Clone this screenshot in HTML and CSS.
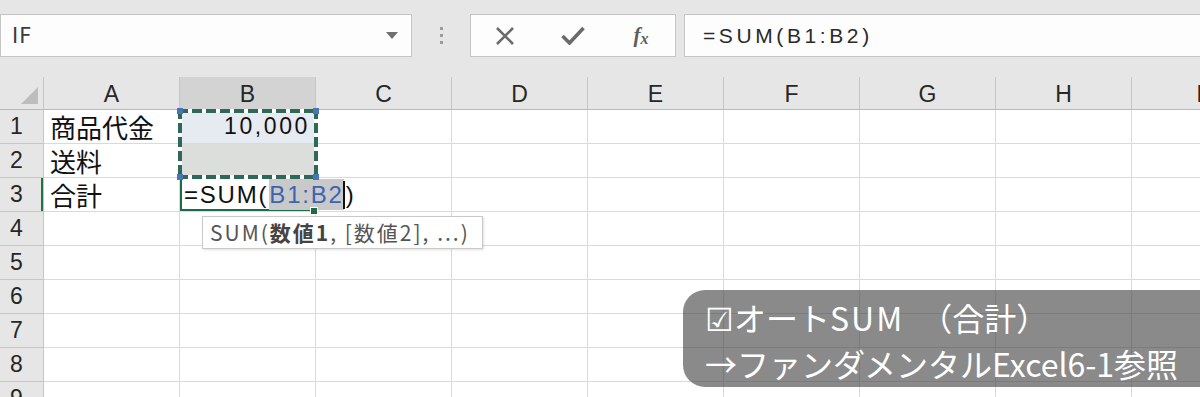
FILE: index.html
```html
<!DOCTYPE html>
<html lang="ja">
<head>
<meta charset="utf-8">
<title>Excel SUM</title>
<link rel="stylesheet" href="styles.css">
</head>
<body>
<div class="app">
  <div class="toolbar">
    <div class="namebox"><span class="nb-text">IF</span><span class="dd"></span></div>
    <div class="grip"><i></i><i></i><i></i></div>
    <div class="btnbox">
      <span class="slot"><svg width="20" height="18" viewBox="0 0 20 18"><path d="M2 1 L18 17 M18 1 L2 17" stroke="#6b6b6b" stroke-width="2.6" fill="none"/></svg></span>
      <span class="slot"><svg width="24" height="19" viewBox="0 0 24 19"><path d="M1.5 10 L8.5 17 L22.5 2" stroke="#6b6b6b" stroke-width="3.6" fill="none" stroke-linejoin="miter"/></svg></span>
      <span class="slot fx"><i>f</i><span class="fx-x">x</span></span>
    </div>
    <div class="formula">=SUM(B1:B2)</div>
  </div>

  <div class="sheet">
    <div class="corner"><span class="tri"></span></div>
    <div class="ch">A</div><div class="ch sel">B</div><div class="ch">C</div><div class="ch">D</div><div class="ch">E</div><div class="ch">F</div><div class="ch">G</div><div class="ch">H</div><div class="ch">I</div>

    <div class="rh">1</div><div class="c jp">商品代金</div><div class="c num b1">10,000<div class="range"><span class="h tl"></span><span class="h tr"></span><span class="h bl"></span><span class="h br"></span></div></div><div class="c"></div><div class="c"></div><div class="c"></div><div class="c"></div><div class="c"></div><div class="c"></div><div class="c"></div>
    <div class="rh">2</div><div class="c jp">送料</div><div class="c b2"></div><div class="c"></div><div class="c"></div><div class="c"></div><div class="c"></div><div class="c"></div><div class="c"></div><div class="c"></div>
    <div class="rh act">3</div><div class="c jp">合計</div><div class="c active"><span class="edit">=SUM(<span class="ref">B1:B2</span><span class="caret"></span>)</span><span class="fill"></span></div><div class="c"></div><div class="c"></div><div class="c"></div><div class="c"></div><div class="c"></div><div class="c"></div><div class="c"></div>
    <div class="rh">4</div><div class="c"></div><div class="c"></div><div class="c"></div><div class="c"></div><div class="c"></div><div class="c"></div><div class="c"></div><div class="c"></div><div class="c"></div>
    <div class="rh">5</div><div class="c"></div><div class="c"></div><div class="c"></div><div class="c"></div><div class="c"></div><div class="c"></div><div class="c"></div><div class="c"></div><div class="c"></div>
    <div class="rh">6</div><div class="c"></div><div class="c"></div><div class="c"></div><div class="c"></div><div class="c"></div><div class="c"></div><div class="c"></div><div class="c"></div><div class="c"></div>
    <div class="rh">7</div><div class="c"></div><div class="c"></div><div class="c"></div><div class="c"></div><div class="c"></div><div class="c"></div><div class="c"></div><div class="c"></div><div class="c"></div>
    <div class="rh">8</div><div class="c"></div><div class="c"></div><div class="c"></div><div class="c"></div><div class="c"></div><div class="c"></div><div class="c"></div><div class="c"></div><div class="c"></div>
    <div class="rh">9</div><div class="c"></div><div class="c"></div><div class="c"></div><div class="c"></div><div class="c"></div><div class="c"></div><div class="c"></div><div class="c"></div><div class="c"></div>

    <div class="tip">SUM(<b>数値1</b>, [数値2], ...)</div>
  </div>

  <div class="note">
    <div class="note-line">☑オート<span class="sum">SUM</span>（合計）</div>
    <div class="note-line">→ファンダメンタルExcel6-1参照</div>
  </div>
</div>
</body>
</html>
```
FILE: styles.css
```css
html, body {
  margin: 0;
  padding: 0;
}
body {
  width: 1200px;
  height: 397px;
  overflow: hidden;
  background: #ffffff;
  font-family: "Liberation Sans", "Noto Sans CJK JP", sans-serif;
  color: #222;
}
.app {
  position: relative;
  width: 1200px;
  height: 397px;
  overflow: hidden;
}

/* ---------- toolbar ---------- */
.toolbar {
  display: flex;
  align-items: flex-start;
  height: 77px;
  box-sizing: border-box;
  padding-top: 14px;
  background: #e6e6e6;
}
.namebox {
  width: 412px;
  height: 43px;
  box-sizing: border-box;
  border: 1px solid #c4c4c4;
  background: #fdfdfd;
  display: flex;
  align-items: center;
  justify-content: space-between;
  padding: 0 13px 0 11px;
}
.nb-text {
  font-family: "DejaVu Sans", sans-serif;
  font-size: 21px;
  color: #3c3c3c;
  letter-spacing: 1px;
}
.dd {
  width: 0;
  height: 0;
  border-left: 6px solid transparent;
  border-right: 6px solid transparent;
  border-top: 7px solid #707070;
}
.grip {
  width: 58px;
  height: 43px;
  display: flex;
  flex-direction: column;
  align-items: center;
  justify-content: center;
  gap: 4px;
}
.grip i {
  display: block;
  width: 3px;
  height: 3px;
  background: #9c9c9c;
}
.btnbox {
  width: 206px;
  height: 43px;
  box-sizing: border-box;
  border: 1px solid #c4c4c4;
  background: #fdfdfd;
  display: flex;
  align-items: center;
}
.slot {
  width: 68px;
  height: 41px;
  display: flex;
  align-items: center;
  justify-content: center;
}
.fx {
  font-family: "Liberation Serif", serif;
  color: #5e5e5e;
  font-size: 21px;
  font-weight: bold;
}
.fx i {
  font-style: italic;
}
.fx-x {
  font-style: italic;
  font-size: 16px;
  margin-top: 6px;
}
.formula {
  flex: 1;
  margin-left: 8px;
  height: 43px;
  box-sizing: border-box;
  border: 1px solid #c4c4c4;
  border-right: none;
  background: #fdfdfd;
  padding-left: 18px;
  font-size: 21px;
  line-height: 41px;
  letter-spacing: 3.6px;
  color: #2a2a2a;
}

/* ---------- sheet ---------- */
.sheet {
  position: relative;
  display: grid;
  grid-template-columns: 44px repeat(9, 136px);
  grid-template-rows: 33px repeat(9, 34px);
}
.corner, .ch, .rh, .c {
  box-sizing: border-box;
  display: flex;
  align-items: center;
}
.corner {
  background: #e6e6e6;
  border-right: 1px solid #c6c6c6;
  border-bottom: 1px solid #b9b9b9;
  justify-content: flex-end;
  align-items: flex-end;
  padding: 0 5px 5px 0;
}
.tri {
  width: 0;
  height: 0;
  border-left: 17px solid transparent;
  border-bottom: 17px solid #bdbdbd;
}
.ch {
  background: #e6e6e6;
  border-right: 1px solid #c6c6c6;
  border-bottom: 1px solid #b9b9b9;
  justify-content: center;
  font-size: 23px;
  color: #262626;
  padding-top: 2px;
}
.ch.sel {
  background: #d3d3d3;
}
.rh {
  background: #e6e6e6;
  border-right: 1px solid #c6c6c6;
  border-bottom: 1px solid #c6c6c6;
  justify-content: center;
  padding-right: 10px;
  font-size: 23px;
  color: #262626;
}
.rh.act {
  box-shadow: inset -2px 0 0 #217346;
}
.c {
  border-right: 1px solid #dadada;
  border-bottom: 1px solid #dadada;
  font-size: 23px;
  color: #111;
  padding-left: 6px;
  overflow: visible;
  white-space: nowrap;
}
.c.jp {
  font-family: "Noto Sans CJK JP", sans-serif;
  font-size: 26px;
}
.c.num {
  justify-content: flex-end;
  padding-right: 5px;
  letter-spacing: 2.6px;
}
.b1 {
  position: relative;
  background: #e6eaf1;
}
.b2 {
  background: #dcdedb;
}
.active {
  position: relative;
  box-shadow: inset 2px 0 0 #1e6b47, inset 0 -2px 0 #1e6b47;
  padding-left: 4px;
  z-index: 2;
}
.edit {
  font-size: 24px;
  letter-spacing: 1.8px;
  color: #111;
  display: flex;
  align-items: center;
  height: 31px;
}
.ref {
  color: #3b64b3;
  background: #c9c9c9;
  height: 31px;
  line-height: 31px;
  margin-left: 1px;
}
.caret {
  display: inline-block;
  width: 2px;
  height: 28px;
  background: #111;
  margin-left: -1px;
  margin-right: 1px;
}
.fill {
  position: absolute;
  right: -3px;
  bottom: -4px;
  width: 6px;
  height: 6px;
  background: #1e6b47;
  border: 1px solid #fff;
}

.range {
  position: absolute;
  left: -2px;
  top: -1px;
  width: 140px;
  height: 70px;
  z-index: 3;
  background:
    repeating-linear-gradient(90deg, #2e6859 0 10px, #ffffff 10px 14px) top left / 100% 4px no-repeat,
    repeating-linear-gradient(90deg, #2e6859 0 10px, #ffffff 10px 14px) bottom left / 100% 4px no-repeat,
    repeating-linear-gradient(180deg, #2e6859 0 10px, #ffffff 10px 14px) top left / 4px 100% no-repeat,
    repeating-linear-gradient(180deg, #2e6859 0 10px, #ffffff 10px 14px) top right / 4px 100% no-repeat;
}
.h {
  position: absolute;
  width: 6px;
  height: 6px;
  background: #4a74b8;
}
.h.tl { left: -1px; top: -1px; }
.h.tr { right: -1px; top: -1px; }
.h.bl { left: -1px; bottom: -1px; }
.h.br { right: -1px; bottom: -1px; }

.tip {
  position: absolute;
  left: 202px;
  top: 139px;
  width: 281px;
  height: 33px;
  box-sizing: border-box;
  border: 1px solid #c9c9c9;
  background: #ffffff;
  box-shadow: 1px 1px 2px rgba(0, 0, 0, 0.12);
  font-family: "Noto Sans CJK JP", sans-serif;
  font-size: 21px;
  letter-spacing: 2px;
  line-height: 31px;
  color: #555;
  padding-left: 7px;
  z-index: 4;
  white-space: nowrap;
}
.tip b {
  color: #444;
}

/* ---------- note overlay ---------- */
.note {
  position: absolute;
  left: 683px;
  top: 290px;
  width: 540px;
  height: 97px;
  box-sizing: border-box;
  border-radius: 22px;
  background: rgba(60, 60, 60, 0.6);
  padding: 4px 0 0 22px;
  color: #ffffff;
  font-family: "Noto Sans CJK JP", sans-serif;
  font-size: 32px;
  z-index: 10;
}
.note-line {
  height: 46px;
  line-height: 46px;
  white-space: nowrap;
}
.sum {
  letter-spacing: 2px;
  margin-right: 16px;
}
```
